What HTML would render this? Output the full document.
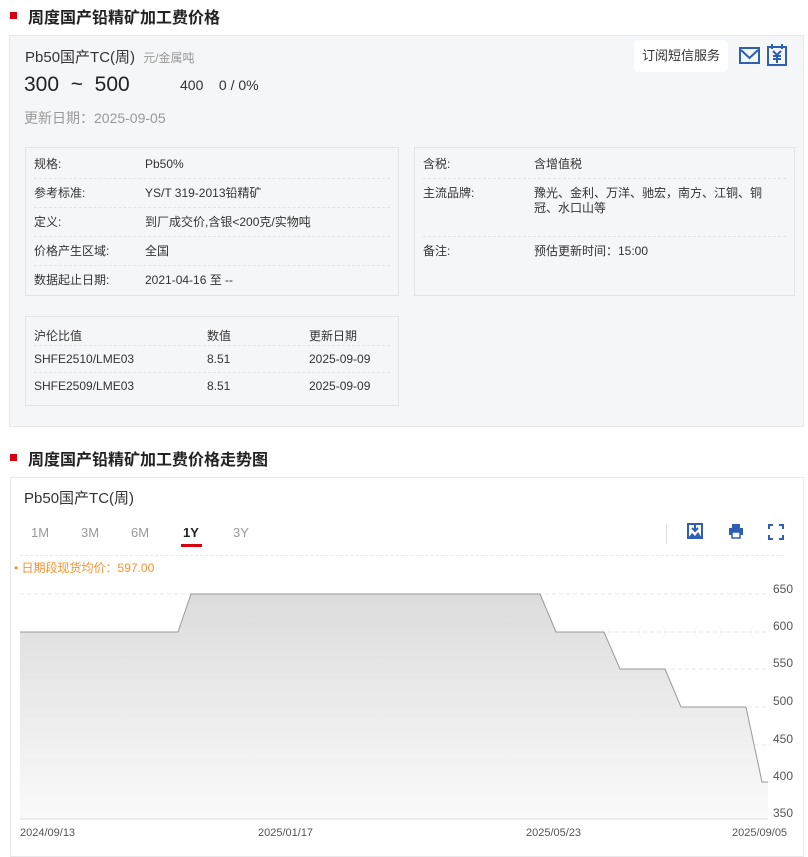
<!DOCTYPE html>
<html><head><meta charset="utf-8"><style>
*{margin:0;padding:0;box-sizing:border-box}
body{width:808px;height:849px;overflow:hidden;background:#fff;font-family:"Liberation Sans","Noto Sans CJK SC",sans-serif;color:#333;position:relative}
.abs{position:absolute}
.h{font-size:16px;font-weight:bold;color:#222;white-space:nowrap}
.sq{width:7px;height:7px;background:#d7000f}
.panel{left:9px;top:35px;width:795px;height:392px;background:#f5f6f8;border:1px solid #e6e8eb}
.box{background:#f5f6f8;border:1px solid #e2e4e8}
.row{position:absolute;left:8px;right:8px;font-size:12px;color:#333;border-bottom:1px dashed #e3e3e3;height:29px;line-height:29px}
.row span{position:absolute;left:111px}
.t{font-size:12px;color:#333;white-space:nowrap}
.g{color:#888}
</style></head><body>
<div class="abs sq" style="left:10px;top:12px"></div>
<div class="abs h" style="left:28px;top:4px">周度国产铅精矿加工费价格</div>
<div class="abs panel"></div>
<div class="abs" style="left:25px;top:46px;font-size:15px;color:#333">Pb50国产TC(周) <span style="font-size:12px;color:#999;margin-left:4px">元/金属吨</span></div>
<div class="abs" style="left:24px;top:73px;font-size:21px;color:#222">300 &nbsp;~ &nbsp;500</div>
<div class="abs" style="left:180px;top:77px;font-size:14px;color:#333">400 &nbsp; &nbsp;0 / 0%</div>
<div class="abs" style="left:24px;top:108px;font-size:14px;color:#999">更新日期：2025-09-05</div>
<div class="abs" style="left:634px;top:40px;width:94px;height:32px;background:#fff;border-radius:4px;font-size:13px;line-height:32px;text-align:center;color:#333">订阅短信服务</div>
<svg class="abs" style="left:739px;top:46px" width="22" height="20"><rect x="1" y="2" width="19" height="15" fill="none" stroke="#2f5fb3" stroke-width="2"/><path d="M2 4 L10.5 12 L19 4" fill="none" stroke="#2f5fb3" stroke-width="2"/></svg>
<svg class="abs" style="left:767px;top:43px" width="20" height="24"><rect x="1" y="4" width="18" height="18" fill="none" stroke="#2f5fb3" stroke-width="2"/><path d="M5 1v5M15 1v5M6 8l4 4 4-4M10 12v8M6 13h8M6 16h8" fill="none" stroke="#2f5fb3" stroke-width="2"/></svg>

<div class="abs box" style="left:25px;top:147px;width:374px;height:149px">
<div class="row" style="top:2px">规格:<span>Pb50%</span></div>
<div class="row" style="top:31px">参考标准:<span>YS/T 319-2013铅精矿</span></div>
<div class="row" style="top:60px">定义:<span>到厂成交价,含银&lt;200克/实物吨</span></div>
<div class="row" style="top:89px">价格产生区域:<span>全国</span></div>
<div class="row" style="top:118px;border:none">数据起止日期:<span>2021-04-16 至 --</span></div>
</div>
<div class="abs box" style="left:414px;top:147px;width:381px;height:149px">
<div class="row" style="top:2px">含税:<span>含增值税</span></div>
<div class="row" style="top:31px;height:58px;line-height:15px;padding-top:7px">主流品牌:<span style="top:7px;width:238px">豫光、金利、万洋、驰宏，南方、江铜、铜冠、水口山等</span></div>
<div class="row" style="top:89px;border:none">备注:<span>预估更新时间：15:00</span></div>
</div>
<div class="abs box" style="left:25px;top:316px;width:374px;height:90px">
<div class="row" style="top:5px;height:24px;line-height:28px">沪伦比值<span style="left:173px">数值</span><span style="left:275px">更新日期</span></div>
<div class="row" style="top:29px;height:27px;line-height:27px">SHFE2510/LME03<span style="left:173px">8.51</span><span style="left:275px">2025-09-09</span></div>
<div class="row" style="top:56px;height:27px;line-height:27px;border:none">SHFE2509/LME03<span style="left:173px">8.51</span><span style="left:275px">2025-09-09</span></div>
</div>

<div class="abs sq" style="left:10px;top:454px"></div>
<div class="abs h" style="left:28px;top:446px">周度国产铅精矿加工费价格走势图</div>
<div class="abs" style="left:10px;top:477px;width:794px;height:380px;border:1px solid #e6e8eb"></div>
<div class="abs" style="left:24px;top:487px;font-size:15px;color:#333">Pb50国产TC(周)</div>
<div class="abs t" style="left:31px;top:525px;font-size:13px;color:#999">1M</div>
<div class="abs t" style="left:81px;top:525px;font-size:13px;color:#999">3M</div>
<div class="abs t" style="left:131px;top:525px;font-size:13px;color:#999">6M</div>
<div class="abs t" style="left:183px;top:525px;font-size:13px;color:#222;font-weight:bold">1Y</div>
<div class="abs" style="left:181px;top:544px;width:21px;height:3px;background:#d7000f"></div>
<div class="abs t" style="left:233px;top:525px;font-size:13px;color:#999">3Y</div>
<div class="abs" style="left:666px;top:524px;width:1px;height:20px;background:#ddd"></div>
<svg class="abs" style="left:687px;top:523px" width="16" height="16"><rect x="1" y="1" width="14" height="14" fill="none" stroke="#2f5fb3" stroke-width="2"/><path d="M1 15 L5 10 L8 13 L11 9 L15 15Z" fill="#2f5fb3"/><path d="M8 2v6M5 5l3 3 3-3" stroke="#2f5fb3" stroke-width="2" fill="none"/></svg>
<svg class="abs" style="left:728px;top:523px" width="16" height="16"><rect x="4" y="1" width="8" height="4" fill="#2f5fb3"/><rect x="1" y="5" width="14" height="7" fill="#2f5fb3"/><rect x="4" y="9" width="8" height="6" fill="#fff" stroke="#2f5fb3" stroke-width="1.5"/></svg>
<svg class="abs" style="left:768px;top:524px" width="16" height="16" fill="none" stroke="#2f5fb3" stroke-width="2"><path d="M1 5V1h4M11 1h4v4M15 11v4h-4M5 15H1v-4"/></svg>
<div class="abs" style="left:20px;top:555px;width:764px;border-top:1px dashed #e8e8e8"></div>
<div class="abs" style="left:14px;top:559px;font-size:12px;color:#f7922e">• 日期段现货均价：597.00</div>
<svg class="abs" style="left:0;top:580px" width="808" height="269">
<defs><linearGradient id="gr" x1="0" y1="0" x2="0" y2="1"><stop offset="0" stop-color="#dcdcdc"/><stop offset="1" stop-color="#fafafa"/></linearGradient></defs>
<g stroke="#e6e6e6" stroke-dasharray="4,3"><line x1="20" x2="770" y1="14" y2="14"/><line x1="20" x2="770" y1="52" y2="52"/><line x1="20" x2="770" y1="89" y2="89"/><line x1="20" x2="770" y1="127" y2="127"/><line x1="20" x2="770" y1="165" y2="165"/><line x1="20" x2="770" y1="202" y2="202"/></g>
<path d="M20 52 H178 L191 14 H540 L556 52 H604 L620 89 H665 L681 127 H746 L762 202 H768 V239 H20Z" fill="url(#gr)"/>
<path d="M20 52 H178 L191 14 H540 L556 52 H604 L620 89 H665 L681 127 H746 L762 202 H768" fill="none" stroke="#999" stroke-width="1"/>
<line x1="20" x2="768" y1="239" y2="239" stroke="#ddd"/>
<g font-size="12" fill="#555" text-anchor="end" font-family="Liberation Sans"><text x="793" y="13">650</text><text x="793" y="50">600</text><text x="793" y="87">550</text><text x="793" y="125">500</text><text x="793" y="163">450</text><text x="793" y="200">400</text><text x="793" y="237">350</text></g>
<g font-size="11" fill="#555" font-family="Liberation Sans"><text x="20" y="256">2024/09/13</text><text x="258" y="256">2025/01/17</text><text x="526" y="256">2025/05/23</text><text x="732" y="256">2025/09/05</text></g>
</svg>
</body></html>
